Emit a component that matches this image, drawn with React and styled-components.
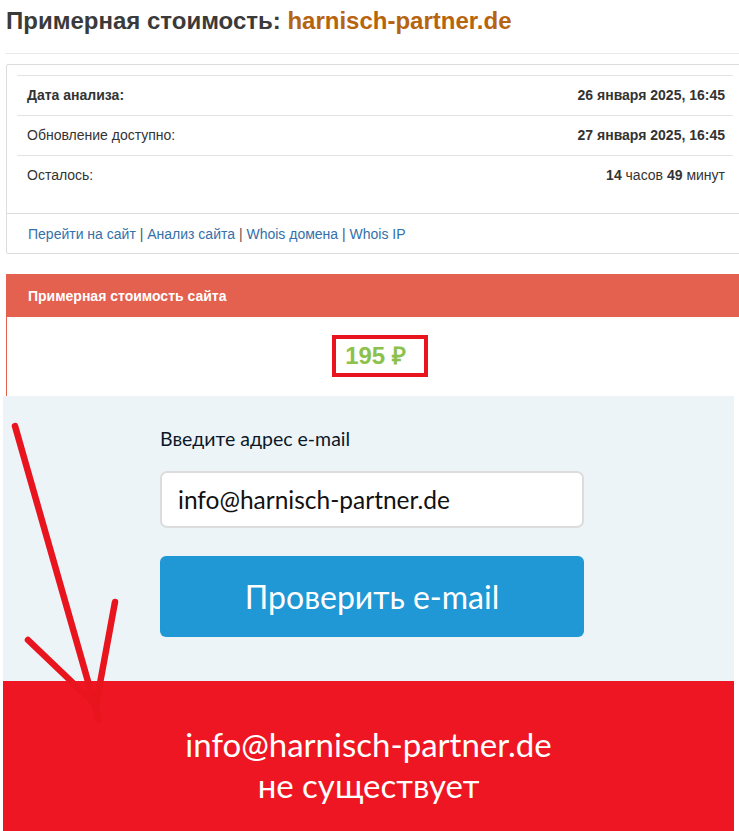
import React from "react";
import styled, { createGlobalStyle } from "styled-components";

const GlobalStyle = createGlobalStyle`
  html, body {
    margin: 0;
    padding: 0;
    overflow: hidden;
    background: #fff;
  }
  body {
    font-family: "Liberation Sans", Arial, sans-serif;
    font-size: 14px;
    color: #333;
  }
`;

const rows = [
  { label: "Дата анализа:", value: "26 января 2025, 16:45", strong: true },
  { label: "Обновление доступно:", value: "27 января 2025, 16:45" },
];

export default function App() {
  return (
    <>
      <GlobalStyle />
      <Page>
        <Title>
          Примерная стоимость: <Domain>harnisch-partner.de</Domain>
        </Title>
        <Rule />

        <InfoPanel>
          <PanelBody>
            <Table>
              <tbody>
                {rows.map((r) => (
                  <tr key={r.label}>
                    <Cell $bold={r.strong}>{r.label}</Cell>
                    <ValueCell>{r.value}</ValueCell>
                  </tr>
                ))}
                <tr>
                  <Cell>Осталось:</Cell>
                  <ValueCell $light>
                    <b>14</b> часов <b>49</b> минут
                  </ValueCell>
                </tr>
              </tbody>
            </Table>
          </PanelBody>
          <PanelFooter>
            <LinkA href="#">Перейти на сайт</LinkA> <Sep>|</Sep>{" "}
            <LinkA href="#">Анализ сайта</LinkA> <Sep>|</Sep>{" "}
            <LinkA href="#">Whois домена</LinkA> <Sep>|</Sep>{" "}
            <LinkA href="#">Whois IP</LinkA>
          </PanelFooter>
        </InfoPanel>

        <CostPanel>
          <CostHeader>Примерная стоимость сайта</CostHeader>
          <CostBody>
            <Price>195 ₽</Price>
          </CostBody>
        </CostPanel>

        <EmailCheck>
          <EmailForm>
            <FieldLabel>Введите адрес e-mail</FieldLabel>
            <EmailInput readOnly value="info@harnisch-partner.de" />
            <CheckButton type="button">Проверить e-mail</CheckButton>
          </EmailForm>
          <ResultBar>
            <ResultLine>info@harnisch-partner.de</ResultLine>
            <ResultLine>не существует</ResultLine>
          </ResultBar>
        </EmailCheck>

        <Arrow viewBox="0 0 140 740" width="140" height="740">
          <g stroke="#e8141e" strokeWidth="6.5" strokeLinecap="round" fill="none">
            <path d="M15 418 L99 712" />
            <path d="M28 632 L96 697" />
            <path d="M115 594 L96 697" />
          </g>
        </Arrow>
      </Page>
    </>
  );
}

const Page = styled.div`
  position: relative;
  width: 744px;
  padding-left: 6px;
  box-sizing: border-box;
`;

const Title = styled.h1`
  margin: 8px 0 0;
  font-size: 24px;
  line-height: 26px;
  font-weight: bold;
  color: #3a3a3a;
`;

const Domain = styled.span`
  color: #b7640f;
`;

const Rule = styled.div`
  border-top: 1px solid #eaeaea;
  margin: 19px 0 10px -1px;
`;

const InfoPanel = styled.div`
  border: 1px solid #ddd;
  border-radius: 2px;
  background: #fff;
`;

const PanelBody = styled.div`
  padding: 10px 10px 10px;
`;

const Table = styled.table`
  width: 100%;
  border-collapse: collapse;
  margin-bottom: 8px;
`;

const Cell = styled.td`
  border-top: 1px solid #e4e4e4;
  padding: 9px 8px 9px 10px;
  line-height: 21px;
  font-weight: ${(p) => (p.$bold ? "bold" : "normal")};
  color: #333;
`;

const ValueCell = styled(Cell)`
  text-align: right;
  font-weight: ${(p) => (p.$light ? "normal" : "bold")};
  b {
    font-weight: bold;
  }
`;

const PanelFooter = styled.div`
  border-top: 1px solid #ddd;
  padding: 10px 15px 9px 21px;
  line-height: 20px;
  color: #555;
`;

const LinkA = styled.a`
  color: #3470a9;
  text-decoration: none;
`;

const Sep = styled.span`
  color: #555;
`;

const CostPanel = styled.div`
  margin-top: 20px;
`;

const CostHeader = styled.div`
  height: 43px;
  display: flex;
  align-items: center;
  padding: 0 22px;
  background: #e4604f;
  color: #fff;
  font-weight: bold;
  font-size: 14px;
`;

const CostBody = styled.div`
  height: 79px;
  box-sizing: border-box;
  border-left: 1px solid #e4604f;
  padding-top: 27px;
  text-align: center;
  background: #fff;
`;

const Price = styled.span`
  position: relative;
  display: inline-block;
  font-size: 24px;
  line-height: 24px;
  font-weight: bold;
  color: #8cc14c;

  &::after {
    content: "";
    position: absolute;
    left: -13px;
    top: -9px;
    width: 96px;
    height: 42px;
    box-sizing: border-box;
    border: 4px solid #e8141e;
  }
`;

const EmailCheck = styled.div`
  width: 731px;
  margin-left: -3px;
  background: #edf4f8;
  font-family: Lato, "Open Sans", sans-serif;
`;

const EmailForm = styled.div`
  padding: 31px 0 44px 157px;
  display: flex;
  flex-direction: column;
  align-items: flex-start;
`;

const FieldLabel = styled.div`
  font-size: 19.5px;
  line-height: 24px;
  color: #0b1828;
`;

const EmailInput = styled.input`
  margin-top: 20px;
  width: 424px;
  height: 57px;
  box-sizing: border-box;
  border: 2px solid #dcdcdc;
  border-radius: 7px;
  background: #fff;
  padding: 0 16px;
  font-family: inherit;
  font-size: 24.5px;
  color: #111;
  outline: none;
`;

const CheckButton = styled.button`
  margin-top: 28px;
  width: 424px;
  height: 81px;
  border: none;
  border-radius: 6px;
  background: #1f98d5;
  color: #fff;
  font-family: inherit;
  font-size: 32px;
  cursor: pointer;
`;

const ResultBar = styled.div`
  height: 160px;
  box-sizing: border-box;
  padding-top: 43px;
  background: #ee1622;
  text-align: center;
`;

const ResultLine = styled.div`
  color: #fff;
  font-size: 33px;
  line-height: 41px;
`;

const Arrow = styled.svg`
  position: absolute;
  left: 0;
  top: 0;
  pointer-events: none;
`;
